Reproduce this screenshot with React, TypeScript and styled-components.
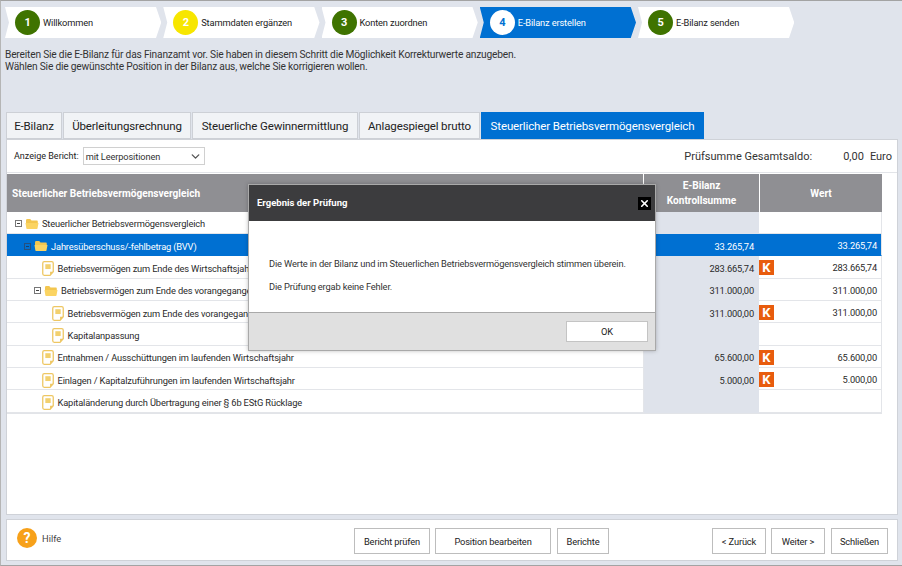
import styled, { createGlobalStyle } from "styled-components";
import { ChevronDown, X } from "lucide-react";

const Global = createGlobalStyle`
  html, body { margin: 0; padding: 0; }
  body { font-family: Roboto, "Noto Sans", sans-serif; color: #222; }
`;

const Page = styled.div`
  position: relative;
  box-sizing: border-box;
  width: 902px;
  height: 566px;
  overflow: hidden;
  background: #e0e4ec;
  border-top: 1px solid #a3a3a3;
  border-left: 1px solid #b5b5b5;
  border-bottom: 1px solid #a3a3a3;
  padding: 6px 4px 4px 4px;
  display: flex;
  flex-direction: column;
`;

const Steps = styled.div`
  display: flex;
  gap: 2px;
  height: 31px;
`;

const Step = styled.div<{ $active?: boolean }>`
  width: 156.25px;
  height: 31px;
  box-sizing: border-box;
  padding-left: 10px;
  display: flex;
  align-items: center;
  gap: 3px;
  font-size: 9.3px;
  letter-spacing: -0.15px;
  background: ${(p) => (p.$active ? "#0070d2" : "#fff")};
  color: ${(p) => (p.$active ? "#fff" : "#222")};
  clip-path: polygon(0 0, 151px 0, 100% 50%, 151px 100%, 0 100%, 4px 50%);
`;

const Circle = styled.span<{ $bg: string; $fg: string }>`
  width: 25px;
  height: 25px;
  border-radius: 50%;
  background: ${(p) => p.$bg};
  color: ${(p) => p.$fg};
  font-weight: 700;
  font-size: 11px;
  display: flex;
  align-items: center;
  justify-content: center;
`;

const Intro = styled.p`
  margin: 11px 0 0 0;
  height: 63px;
  font-size: 10.2px;
  letter-spacing: -0.19px;
  line-height: 11.5px;
  color: #333;
`;

const Tabs = styled.div`
  display: flex;
  gap: 1px;
  margin-left: 1px;
  height: 27px;
`;

const Tab = styled.div<{ $active?: boolean; $w: number }>`
  width: ${(p) => p.$w}px;
  box-sizing: border-box;
  display: flex;
  align-items: center;
  justify-content: center;
  font-size: 11.5px;
  letter-spacing: -0.13px;
  white-space: nowrap;
  background: ${(p) => (p.$active ? "#0070d2" : "#f1f3f6")};
  color: ${(p) => (p.$active ? "#fff" : "#222")};
  border: 1px solid ${(p) => (p.$active ? "#0070d2" : "#cdd0d6")};
`;

const Panel = styled.div`
  box-sizing: border-box;
  margin-left: 1px;
  width: 892px;
  height: 376px;
  background: #fff;
  border: 1px solid #cfd2d8;
  display: flex;
  flex-direction: column;
`;

const Toolbar = styled.div`
  height: 33px;
  flex: none;
  box-sizing: border-box;
  border-bottom: 1px solid #e2e4e8;
  padding: 0 5px 0 7px;
  display: flex;
  align-items: center;
  font-size: 9px;
`;

const Select = styled.div`
  box-sizing: border-box;
  margin-left: 4px;
  width: 122px;
  height: 18px;
  border: 1px solid #d0d0d0;
  padding: 0 2px;
  display: flex;
  align-items: center;
  justify-content: space-between;
  font-size: 9.2px;
  letter-spacing: -0.1px;
  color: #333;
`;

const Checksum = styled.div`
  margin-left: auto;
  display: flex;
  font-size: 11px;
  color: #333;
`;

const ChecksumValue = styled.span`
  margin-left: 31px;
`;

const ChecksumUnit = styled.span`
  margin-left: 6px;
`;

const Table = styled.div`
  margin-top: 1px;
  width: 875px;
  border-bottom: 1px solid #e2e4e8;
`;

const HeadRow = styled.div`
  display: grid;
  grid-template-columns: 636px 115px 122px;
  gap: 1px;
  height: 37.5px;
`;

const HeadCell = styled.div<{ $center?: boolean }>`
  background: #8f8f93;
  color: #fff;
  font-weight: 700;
  font-size: 10.1px;
  line-height: 15px;
  display: flex;
  align-items: center;
  box-sizing: border-box;
  padding: 1px 5px 0;
  text-align: center;
  justify-content: ${(p) => (p.$center ? "center" : "flex-start")};
`;

const Row = styled.div<{ $selected?: boolean }>`
  display: grid;
  grid-template-columns: 637px 115px 123px;
  height: 22.35px;
  font-size: 9.3px;
  letter-spacing: -0.15px;
  color: ${(p) => (p.$selected ? "#fff" : "#2a2a2a")};
  background: ${(p) => (p.$selected ? "#0070d2" : "#fff")};
`;

const NameCell = styled.div<{ $indent: number; $selected?: boolean }>`
  display: flex;
  align-items: center;
  gap: 3.5px;
  padding: 3px 0 0 ${(p) => p.$indent}px;
  white-space: nowrap;
  overflow: hidden;
  border-bottom: 1px solid ${(p) => (p.$selected ? "#0070d2" : "#e3e5e9")};
  border-right: 1px solid #e3e5e9;
`;

const SumCell = styled.div<{ $selected?: boolean }>`
  background: ${(p) => (p.$selected ? "#0070d2" : "#dfe3eb")};
  border-bottom: 1px solid ${(p) => (p.$selected ? "#0070d2" : "#dfe3eb")};
  display: flex;
  align-items: center;
  justify-content: flex-end;
  padding: 3px 5px 0 0;
`;

const ValueCell = styled.div<{ $selected?: boolean }>`
  display: flex;
  align-items: center;
  justify-content: space-between;
  padding: 2px 4px 0 0;
  border-right: 1px solid #e3e5e9;
  border-bottom: 1px solid ${(p) => (p.$selected ? "#0070d2" : "#e3e5e9")};
`;

const KBadge = styled.span`
  width: 15px;
  height: 15px;
  background: #e85c0d;
  color: #fff;
  font-weight: 700;
  font-size: 13px;
  letter-spacing: 0;
  display: flex;
  align-items: center;
  justify-content: center;
`;

const Toggle = styled.span<{ $selected?: boolean }>`
  width: 7px;
  height: 7px;
  box-sizing: border-box;
  border: 1px solid ${(p) => (p.$selected ? "#26507f" : "#777")};
  margin-right: -1px;
  display: flex;
  align-items: center;
  justify-content: center;
  flex: none;
  &::after {
    content: "";
    width: 3px;
    height: 1px;
    background: ${(p) => (p.$selected ? "#1c3f66" : "#444")};
  }
`;

const Spacer = styled.div`
  flex: 1;
`;

const Footer = styled.div`
  box-sizing: border-box;
  margin: 4px 0 0 1px;
  width: 892px;
  height: 42px;
  background: #fff;
  border: 1px solid #cfd2d8;
  padding: 8px 8px 6px 10px;
  display: flex;
  align-items: flex-start;
  font-size: 9.3px;
`;

const Help = styled.div`
  display: flex;
  align-items: center;
  gap: 5px;
  width: 337px;
  color: #444;
`;

const HelpIcon = styled.span`
  width: 20px;
  height: 20px;
  border-radius: 50%;
  background: #f7a11a;
  color: #fff;
  font-weight: 700;
  font-size: 14px;
  display: flex;
  align-items: center;
  justify-content: center;
`;

const Button = styled.button<{ $w: number; $gap?: number }>`
  width: ${(p) => p.$w}px;
  height: 26px;
  margin-left: ${(p) => p.$gap ?? 5}px;
  background: #fff;
  border: 1px solid #bdbdbd;
  padding: 0;
  font-family: inherit;
  font-size: 9.3px;
  letter-spacing: -0.15px;
  color: #222;
  flex: none;
`;

const Modal = styled.div`
  position: absolute;
  left: 247px;
  top: 183px;
  width: 408px;
  height: 167px;
  box-sizing: border-box;
  border: 1px solid #a9a9a9;
  background: #fff;
  display: flex;
  flex-direction: column;
  box-shadow: 0 0 4px rgba(0, 0, 0, 0.25);
`;

const ModalHead = styled.div`
  height: 36px;
  flex: none;
  box-sizing: border-box;
  background: #3c3c3e;
  color: #fff;
  font-weight: 700;
  font-size: 9.5px;
  padding: 0 4px 2px 8px;
  display: flex;
  align-items: center;
  justify-content: space-between;
`;

const CloseBox = styled.span`
  width: 13px;
  height: 13px;
  background: #000;
  color: #fff;
  display: flex;
  align-items: center;
  justify-content: center;
  margin-top: 3px;
`;

const ModalBody = styled.div`
  flex: 1;
  padding: 37px 0 0 20px;
  font-size: 9.3px;
  letter-spacing: -0.16px;
  color: #333;
  line-height: 12px;
  border-bottom: 1px solid #a9a9a9;
`;

const ModalLine = styled.p`
  margin: 0 0 11px 0;
`;

const ModalFoot = styled.div`
  height: 37px;
  flex: none;
  background: #e0e0e0;
  padding: 8px 7px 0 0;
  box-sizing: border-box;
  display: flex;
  justify-content: flex-end;
`;

const OkButton = styled(Button)`
  height: 21px;
  border: 1px solid #c4c4c4;
`;

const Folder = () => (
  <svg width="14" height="12" viewBox="0 0 14 12">
    <path d="M1 2.5C1 1.7 1.5 1 2.2 1h3l1.3 1.5h5.3c.6 0 1 .5 1 1V5H1z" fill="#f3c64f" />
    <path d="M.5 5h13l-1 5.6c-.1.3-.3.4-.6.4H2c-.3 0-.5-.1-.6-.4z" fill="#fbd462" />
  </svg>
);

const Doc = () => (
  <svg width="12" height="15" viewBox="0 0 11 14">
    <path d="M2 .6h7c.8 0 1.4.6 1.4 1.4v8L7.4 13.4H2C1.2 13.4.6 12.8.6 12V2C.6 1.2 1.2.6 2 .6z" fill="#fff" stroke="#eec763" strokeWidth="1.2" />
    <rect x="3" y="3" width="5" height="4.5" fill="#f2d06e" />
    <path d="M7.4 13.4V10h3z" fill="#eec763" />
  </svg>
);

type RowData = {
  indent: number;
  icon: "folder" | "doc";
  name: string;
  sum?: string;
  value?: string;
  k?: boolean;
  selected?: boolean;
};

const rows: RowData[] = [
  { indent: 8, icon: "folder", name: "Steuerlicher Betriebsvermögensvergleich" },
  { indent: 17, icon: "folder", name: "Jahresüberschuss/-fehlbetrag (BVV)", sum: "33.265,74", value: "33.265,74", selected: true },
  { indent: 35, icon: "doc", name: "Betriebsvermögen zum Ende des Wirtschaftsjahres", sum: "283.665,74", value: "283.665,74", k: true },
  { indent: 27, icon: "folder", name: "Betriebsvermögen zum Ende des vorangegangenen Wirtschaftsjahres", sum: "311.000,00", value: "311.000,00" },
  { indent: 45, icon: "doc", name: "Betriebsvermögen zum Ende des vorangegangenen Wirtschaftsjahres", sum: "311.000,00", value: "311.000,00", k: true },
  { indent: 45, icon: "doc", name: "Kapitalanpassung" },
  { indent: 35, icon: "doc", name: "Entnahmen / Ausschüttungen im laufenden Wirtschaftsjahr", sum: "65.600,00", value: "65.600,00", k: true },
  { indent: 35, icon: "doc", name: "Einlagen / Kapitalzuführungen im laufenden Wirtschaftsjahr", sum: "5.000,00", value: "5.000,00", k: true },
  { indent: 35, icon: "doc", name: "Kapitaländerung durch Übertragung einer § 6b EStG Rücklage" },
];

const green = "#3f7300";

const App = () => (
  <Page>
    <Global />
    <Steps>
      <Step><Circle $bg={green} $fg="#fff">1</Circle>Willkommen</Step>
      <Step><Circle $bg="#f7e600" $fg="#fff">2</Circle>Stammdaten ergänzen</Step>
      <Step><Circle $bg={green} $fg="#fff">3</Circle>Konten zuordnen</Step>
      <Step $active><Circle $bg="#fff" $fg="#0070d2">4</Circle>E-Bilanz erstellen</Step>
      <Step><Circle $bg={green} $fg="#fff">5</Circle>E-Bilanz senden</Step>
    </Steps>
    <Intro>
      Bereiten Sie die E-Bilanz für das Finanzamt vor. Sie haben in diesem Schritt die Möglichkeit Korrekturwerte anzugeben.
      <br />
      Wählen Sie die gewünschte Position in der Bilanz aus, welche Sie korrigieren wollen.
    </Intro>
    <Tabs>
      <Tab $w={56}>E-Bilanz</Tab>
      <Tab $w={128}>Überleitungsrechnung</Tab>
      <Tab $w={166}>Steuerliche Gewinnermittlung</Tab>
      <Tab $w={121}>Anlagespiegel brutto</Tab>
      <Tab $w={223} $active>Steuerlicher Betriebsvermögensvergleich</Tab>
    </Tabs>
    <Panel>
      <Toolbar>
        Anzeige Bericht:
        <Select>
          mit Leerpositionen
          <ChevronDown size={13} color="#555" strokeWidth={2.5} />
        </Select>
        <Checksum>
          Prüfsumme Gesamtsaldo:
          <ChecksumValue>0,00</ChecksumValue>
          <ChecksumUnit>Euro</ChecksumUnit>
        </Checksum>
      </Toolbar>
      <Table>
        <HeadRow>
          <HeadCell>Steuerlicher Betriebsvermögensvergleich</HeadCell>
          <HeadCell $center>E-Bilanz<br />Kontrollsumme</HeadCell>
          <HeadCell $center>Wert</HeadCell>
        </HeadRow>
        {rows.map((r, i) => (
          <Row key={i} $selected={r.selected}>
            <NameCell $indent={r.indent} $selected={r.selected}>
              {r.icon === "folder" && <Toggle $selected={r.selected} />}
              {r.icon === "folder" ? <Folder /> : <Doc />}
              {r.name}
            </NameCell>
            <SumCell $selected={r.selected}>{r.sum}</SumCell>
            <ValueCell $selected={r.selected}>
              {r.k ? <KBadge>K</KBadge> : <span />}
              {r.value}
            </ValueCell>
          </Row>
        ))}
      </Table>
      <Spacer />
    </Panel>
    <Footer>
      <Help>
        <HelpIcon>?</HelpIcon>
        Hilfe
      </Help>
      <Button $w={76} $gap={0}>Bericht prüfen</Button>
      <Button $w={116}>Position bearbeiten</Button>
      <Button $w={52} $gap={6}>Berichte</Button>
      <Button $w={54} $gap={103}>&lt; Zurück</Button>
      <Button $w={54}>Weiter &gt;</Button>
      <Button $w={57} $gap={6}>Schließen</Button>
    </Footer>
    <Modal>
      <ModalHead>
        Ergebnis der Prüfung
        <CloseBox><X size={11} strokeWidth={3.5} /></CloseBox>
      </ModalHead>
      <ModalBody>
        <ModalLine>Die Werte in der Bilanz und im Steuerlichen Betriebsvermögensvergleich stimmen überein.</ModalLine>
        <ModalLine>Die Prüfung ergab keine Fehler.</ModalLine>
      </ModalBody>
      <ModalFoot>
        <OkButton $w={82}>OK</OkButton>
      </ModalFoot>
    </Modal>
  </Page>
);

export default App;
